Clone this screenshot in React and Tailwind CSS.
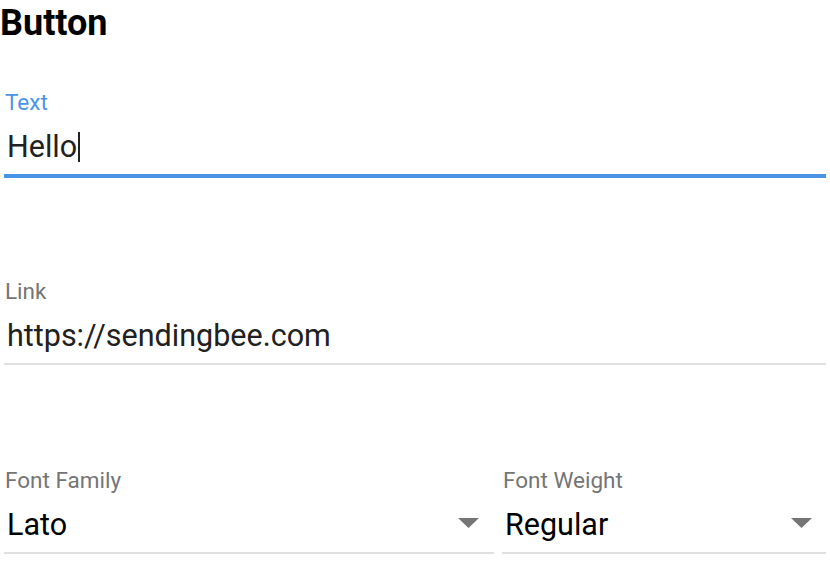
export default function App() {
  const font = { fontFamily: 'Roboto, "Liberation Sans", sans-serif' };
  return (
    <div className="w-[830px] h-[578px] bg-white overflow-hidden" style={font}>
      <div className="text-[36px] leading-[46px] font-bold text-black">Button</div>
      <div className="mt-[44px] flex flex-col gap-[101px] px-[4px]">
        {/* Text field (focused) */}
        <div className="flex flex-col w-[822px]">
          <div className="h-[24px] text-[22.5px] leading-[24px] text-[#4a94e6] pl-[1px]">Text</div>
          <div className="mt-[15px] h-[36px] text-[30.5px] leading-[36px] text-[#212121] pl-[3px] flex items-center">
            <span>Hello</span>
            <span className="inline-block w-[2px] h-[30px] bg-[#212121] ml-[1px]"></span>
          </div>
          <div className="mt-[9px] h-[4px] bg-[#4a94e6]"></div>
        </div>
        {/* Link field */}
        <div className="flex flex-col w-[822px]">
          <div className="h-[24px] text-[22.5px] leading-[24px] text-[#757575] pl-[1px]">Link</div>
          <div className="mt-[15px] h-[36px] text-[30.5px] leading-[36px] text-[#212121] pl-[3px]">https://sendingbee.com</div>
          <div className="mt-[9px] h-[4px]">
            <div className="h-[2px] bg-[#e0e0e0]"></div>
          </div>
        </div>
        {/* Selects */}
        <div className="flex gap-[8px] w-[822px]">
          <div className="flex flex-col w-[490px]">
            <div className="h-[24px] text-[22.5px] leading-[24px] text-[#757575] pl-[1px]">Font Family</div>
            <div className="mt-[15px] h-[36px] text-[30.5px] leading-[36px] text-black pl-[3px] flex items-center justify-between">
              <span>Lato</span>
              <svg width="21" height="10" viewBox="0 0 21 10" className="mr-[15px] -mt-[4px]">
                <polygon points="0,0 21,0 10.5,10" fill="#757575" />
              </svg>
            </div>
            <div className="mt-[9px] h-[4px]">
              <div className="h-[2px] bg-[#e0e0e0]"></div>
            </div>
          </div>
          <div className="flex flex-col w-[324px]">
            <div className="h-[24px] text-[22.5px] leading-[24px] text-[#757575] pl-[1px]">Font Weight</div>
            <div className="mt-[15px] h-[36px] text-[30.5px] leading-[36px] text-black pl-[3px] flex items-center justify-between">
              <span>Regular</span>
              <svg width="21" height="10" viewBox="0 0 21 10" className="mr-[14px] -mt-[4px]">
                <polygon points="0,0 21,0 10.5,10" fill="#757575" />
              </svg>
            </div>
            <div className="mt-[9px] h-[4px]">
              <div className="h-[2px] bg-[#e0e0e0]"></div>
            </div>
          </div>
        </div>
      </div>
    </div>
  );
}
